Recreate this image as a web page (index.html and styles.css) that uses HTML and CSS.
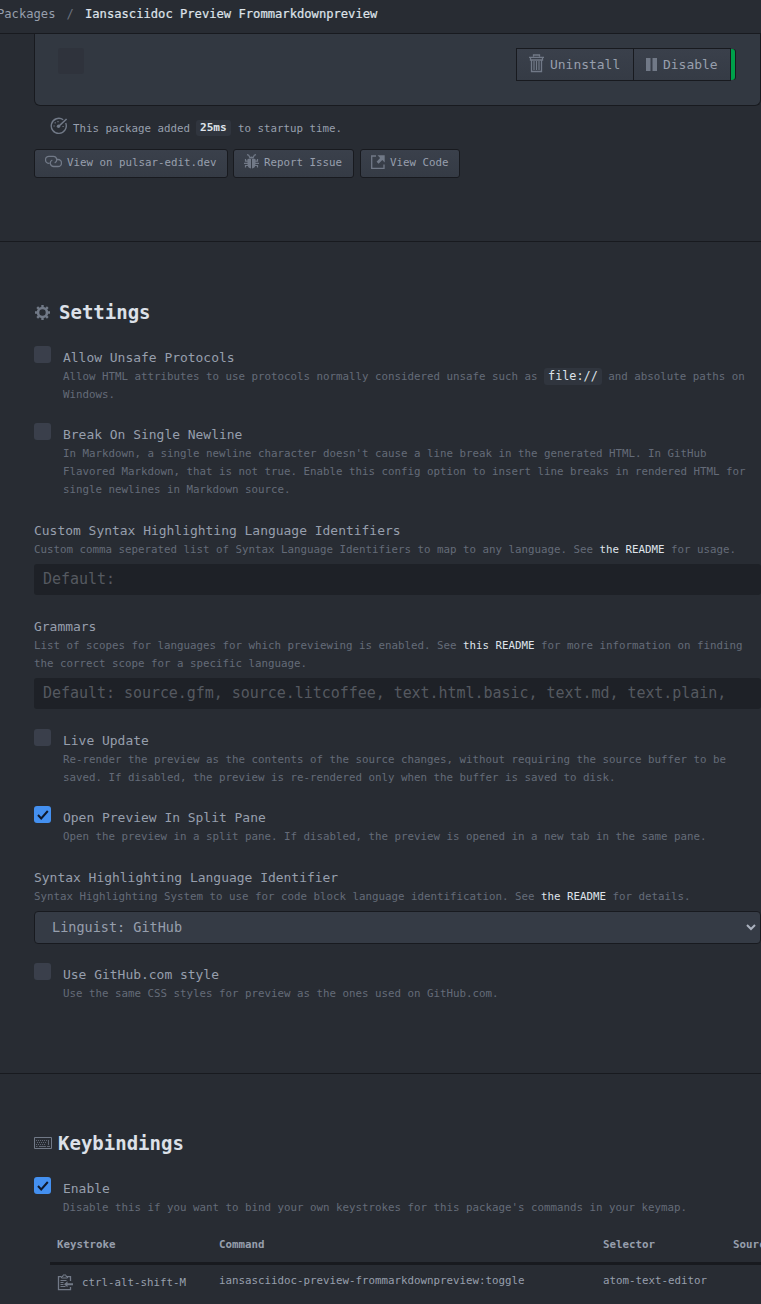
FILE: index.html
```html
<!DOCTYPE html>
<html lang="en">
<head>
<meta charset="utf-8">
<title>Package settings</title>
<link rel="stylesheet" href="styles.css">
</head>
<body>
<nav class="crumbs"><span class="crumb">Packages</span><span class="slash">/</span><span class="crumb active">Iansasciidoc Preview Frommarkdownpreview</span></nav>

<section class="overview">
  <div class="card">
    <div class="avatar"></div>
    <div class="actions">
      <button class="action uninstall"><svg width="15" height="19" viewBox="0 0 15 19" fill="none" stroke="currentColor"><path d="M0 3.300h15M4.500 2.500V1h6v1.500M1.500 4v2h12V4M2.500 6v11.500h10V6" stroke-width="1.3"/><path d="M5 7v9M7.500 7v9M10 7v9" stroke-width="1.200"/></svg>Uninstall</button>
      <button class="action disable"><svg width="11" height="13" viewBox="0 0 11 13" fill="currentColor"><path d="M0 0h4.500v13H0zM6.500 0H11v13H6.500z"/></svg>Disable</button>
      <span class="status"></span>
    </div>
  </div>
  <p class="startup"><svg width="18" height="18" viewBox="0 0 18 18" fill="none" stroke="currentColor"><path d="M13.2 2.8A7.5 7.5 0 1 0 15.7 6" stroke-width="1.4"/><path d="M8.5 9.5L16.6 2" stroke-width="1.7"/><circle cx="8.5" cy="9.3" r="1.7" fill="currentColor" stroke="none"/><path d="M3.5 9h1.2M4.7 5.5l.9.8M8 4v1.2M12.5 9.5h1.2" stroke-width="1.2"/></svg><span>This package added</span><code class="time">25ms</code><span>to startup time.</span></p>
  <div class="links">
    <button class="btn view"><svg width="17" height="13" viewBox="0 0 17 13" fill="none" stroke="currentColor" stroke-width="1.3"><path d="M4.500 8.300H4A3.500 3.500 0 0 1 4 1.300h4.200a3.400 3.400 0 0 1 1.500 6.500"/><path d="M12 4.500h1a3.500 3.500 0 0 1 0 7H8.800A3.400 3.400 0 0 1 7.300 5"/></svg>View on pulsar-edit.dev</button>
    <button class="btn report"><svg width="15" height="15" viewBox="0 0 15 15" fill="none" stroke="currentColor"><path d="M4.500 4.500Q5 2.500 7.500 2.500t3 2z" fill="currentColor" stroke="none"/><path d="M3.500 5H7v9.500Q3.500 14 3.500 10zM8 5h3.500v5q0 4-3.500 4.500z" fill="currentColor" stroke="none"/><path d="M5.700 3.300L4.700 1.200 3 .7M9.300 3.300l1-2.100L12 .7M4 7.200H1.500V5M4 9.300H0M4 11.500H1.500v2M11 7.200h2.500V5M11 9.300h4M11 11.500h2.500v2" stroke-width="1.200"/></svg>Report Issue</button>
    <button class="btn code-link"><svg width="14" height="14" viewBox="0 0 14 14" fill="none" stroke="currentColor"><path d="M5 1H.7v12.300H13V9.500" stroke-width="1.3"/><path d="M6.500 .3h7.200v7.200l-2.400-2.400-3.700 3.600-2-2 3.500-3.700z" fill="currentColor" stroke="none"/></svg>View Code</button>
  </div>
</section>

<section class="panel">
  <h2 class="heading"><svg class="gear" width="17" height="17" viewBox="0 0 17 17" fill="none" stroke="currentColor"><circle cx="8.500" cy="8.500" r="4.500" stroke-width="2.600"/><path d="M8.500 1v3M8.500 13v3M1 8.500h3M13 8.500h3M3.200 3.200l2 2M11.800 11.800l2 2M13.800 3.200l-2 2M5.200 11.800l-2 2" stroke-width="2.400"/></svg>Settings</h2>

  <div class="setting check"><i class="box"></i><div><div class="label">Allow Unsafe Protocols</div><div class="desc">Allow HTML attributes to use protocols normally considered unsafe such as <code class="inline">file://</code> and absolute paths on<br>Windows.</div></div></div>
  <div class="setting check"><i class="box"></i><div><div class="label">Break On Single Newline</div><div class="desc">In Markdown, a single newline character doesn't cause a line break in the generated HTML. In GitHub<br>Flavored Markdown, that is not true. Enable this config option to insert line breaks in rendered HTML for<br>single newlines in Markdown source.</div></div></div>
  <div class="setting lead"><div class="label">Custom Syntax Highlighting Language Identifiers</div><div class="desc">Custom comma seperated list of Syntax Language Identifiers to map to any language. See <b>the README</b> for usage.</div><div class="field">Default:</div></div>
  <div class="setting"><div class="label">Grammars</div><div class="desc">List of scopes for languages for which previewing is enabled. See <b>this README</b> for more information on finding<br>the correct scope for a specific language.</div><div class="field">Default: source.gfm, source.litcoffee, text.html.basic, text.md, text.plain,</div></div>
  <div class="setting check"><i class="box"></i><div><div class="label">Live Update</div><div class="desc">Re-render the preview as the contents of the source changes, without requiring the source buffer to be<br>saved. If disabled, the preview is re-rendered only when the buffer is saved to disk.</div></div></div>
  <div class="setting check"><i class="box on"><svg width="17" height="17" viewBox="0 0 17 17"><path d="M4 9l3.2 3.4L13.8 5"/></svg></i><div><div class="label">Open Preview In Split Pane</div><div class="desc">Open the preview in a split pane. If disabled, the preview is opened in a new tab in the same pane.</div></div></div>
  <div class="setting lead"><div class="label">Syntax Highlighting Language Identifier</div><div class="desc">Syntax Highlighting System to use for code block language identification. See <b>the README</b> for details.</div><div class="select"><span>Linguist: GitHub</span><svg width="10" height="7" viewBox="0 0 10 7"><path d="M1 1l4 4 4-4"/></svg></div></div>
  <div class="setting check"><i class="box"></i><div><div class="label">Use GitHub.com style</div><div class="desc">Use the same CSS styles for preview as the ones used on GitHub.com.</div></div></div>
</section>

<section class="panel keys">
  <h2 class="heading"><svg class="keyboard" width="18" height="12" viewBox="0 0 18 12" fill="none" stroke="currentColor"><path d="M.5.5h17v11H.5z"/><g opacity=".75"><path d="M2 3.500h14M3 5.500h10M2 7.500h10" stroke-dasharray="1 1"/><path d="M2 9.500h1.500M5 9.500h7M13 9.500h3M14.500 3v5"/></g></svg>Keybindings</h2>
  <div class="setting check"><i class="box on"><svg width="17" height="17" viewBox="0 0 17 17"><path d="M4 9l3.2 3.4L13.8 5"/></svg></i><div><div class="label">Enable</div><div class="desc">Disable this if you want to bind your own keystrokes for this package's commands in your keymap.</div></div></div>
  <div class="table">
    <div class="row head"><span>Keystroke</span><span>Command</span><span>Selector</span><span>Source</span></div>
    <div class="row"><span class="stroke"><svg width="16" height="17" viewBox="0 0 16 17" fill="none" stroke="currentColor"><path d="M4 2.700H1.500v13H13.500V13M10 2.700h3.500V7" stroke-width="1.3"/><path d="M4.500 4V2.500h1.500V1h3v1.500h1.500V4z"/><path d="M3.500 6.500h6M3.500 8.500h3M3.500 10.500h3M3.500 12.500h5"/><path d="M7 10.300l3.500-3v2H16v2h-5.500v2z" fill="currentColor" stroke="none"/></svg>ctrl-alt-shift-M</span><span>iansasciidoc-preview-frommarkdownpreview:toggle</span><span>atom-text-editor</span><span></span></div>
  </div>
</section>
</body>
</html>
```
FILE: styles.css
```css
* { box-sizing: border-box; }
html, body { height: 1304px; overflow: hidden; }
body {
  margin: 0;
  background: #282c33;
  color: #979fad;
  font: 10.8px/18px "DejaVu Sans Mono", monospace;
  white-space: nowrap;
  display: flex;
  flex-direction: column;
}
.crumbs, .overview, .panel { flex-shrink: 0; }
svg { flex: none; display: block; color: #717987; }

.crumbs {
  display: flex;
  height: 34px;
  padding-top: 4px;
  border-bottom: 1px solid #181a1f;
  font-size: 12.15px;
  line-height: 20px;
  text-indent: -3px;
}
.slash { width: 29.5px; text-indent: 0; text-align: center; color: #6b727f; }
.active { text-indent: 0; color: #dfe3ea; -webkit-text-stroke: .2px #dfe3ea; }

.overview { height: 207px; padding-left: 34px; }
.card {
  display: flex;
  justify-content: space-between;
  height: 72px;
  padding: 14px 25px 0 23px;
  background: #323841;
  border: 1px solid #181a1f;
  border-top: 0;
  border-radius: 0 0 6px 6px;
}
.avatar { width: 26px; height: 26px; border-radius: 3px; background: #2f333c; }
.actions { display: flex; height: 33px; }
button { font: inherit; color: inherit; border: 1px solid #181a1f; background: linear-gradient(#3a404b, #353b45); display: flex; align-items: center; }
.action { font-size: 12.96px; height: 33px; padding: 0 12px; }
.uninstall { width: 118px; gap: 6px; }
.uninstall svg { margin-top: -3px; }
.disable { width: 98px; gap: 6px; margin-left: -1px; }
.status { width: 4px; margin: 1px 0; background: #00a14a; border-radius: 0 3px 3px 0; box-shadow: 1px 0 #181a1f; }

.startup { display: flex; height: 20px; margin: 12px 0 0 16px; }
.startup svg { margin: -1px 5px 0 0; }
.startup span { line-height: 21px; }
.startup span:first-of-type { width: 123px; }
.time { font: bold 11.1px/15px "DejaVu Sans Mono", monospace; height: 16px; margin: 2px 7px 0 0; padding: 0 4px; width: 35px; border-radius: 3px; background: #30353e; color: #dfe3ea; }

.links { display: flex; gap: 5px; margin-top: 11px; }
.btn { height: 29px; padding: 0 0 2px 10px; border-radius: 3px; gap: 5px; }
.btn svg { margin-top: -2px; }
.view { width: 194px; }
.report { width: 121px; }
.code-link { width: 100px; margin-left: 1px; }

.panel { border-top: 1px solid #181a1f; height: 832px; padding: 55px 0 0 34px; }
.heading { display: flex; align-items: center; height: 30px; margin: 0 0 21px; font-size: 19px; line-height: 30px; color: #dce0e8; gap: 8px; }
.keyboard { margin-right: -2px; }
.setting { margin-bottom: 21px; }
.lead { padding-top: 1px; }
.check { display: flex; gap: 12px; }
.box { flex: none; width: 17px; height: 17px; margin-top: -2px; border-radius: 3px; background: #3a3f4b; }
.on { background: #4490f0; }
.on path { fill: none; stroke: #10192b; stroke-width: 2; }
.label { font-size: 12.96px; line-height: 20px; height: 20px; }
.desc { color: #646b78; line-height: 18px; }
.desc b { color: #dfe3ea; font-weight: 400; }
.inline { font: 11.8px/1 "DejaVu Sans Mono", monospace; padding: 1px 4px 2px; border-radius: 3px; background: #30353e; color: #dfe3ea; }
.field { height: 31px; margin: 5px 0 22px; padding-left: 9px; border-radius: 3px; background: #1e2127; color: #555960; font-size: 15px; letter-spacing: -.04px; line-height: 30px; }
.select { display: flex; align-items: center; justify-content: space-between; height: 33px; margin: 5px 0 21px; padding: 0 4px 0 17px; border: 1px solid #181a1f; border-radius: 4px; background: #353b45; font-size: 13.5px; line-height: 18px; }
.select span { margin-top: -2px; }
.select path { fill: none; stroke: #abb2bf; stroke-width: 2; }

.keys { flex: 1 0 0; height: auto; min-height: 0; overflow: hidden; padding-top: 54px; }
.keys .setting { margin-bottom: 12px; }
.table { margin-left: 16px; }
.row { display: grid; grid-template-columns: 162px 384px 130px 60px; padding: 6px 0 0 7px; height: 40px; line-height: 20px; border-bottom: 1px solid #1f2228; }
.head { font-weight: bold; border-bottom: 3px solid #181a1f; height: 36px; }
.stroke { display: flex; align-items: center; gap: 9px; height: 23px; }
```
